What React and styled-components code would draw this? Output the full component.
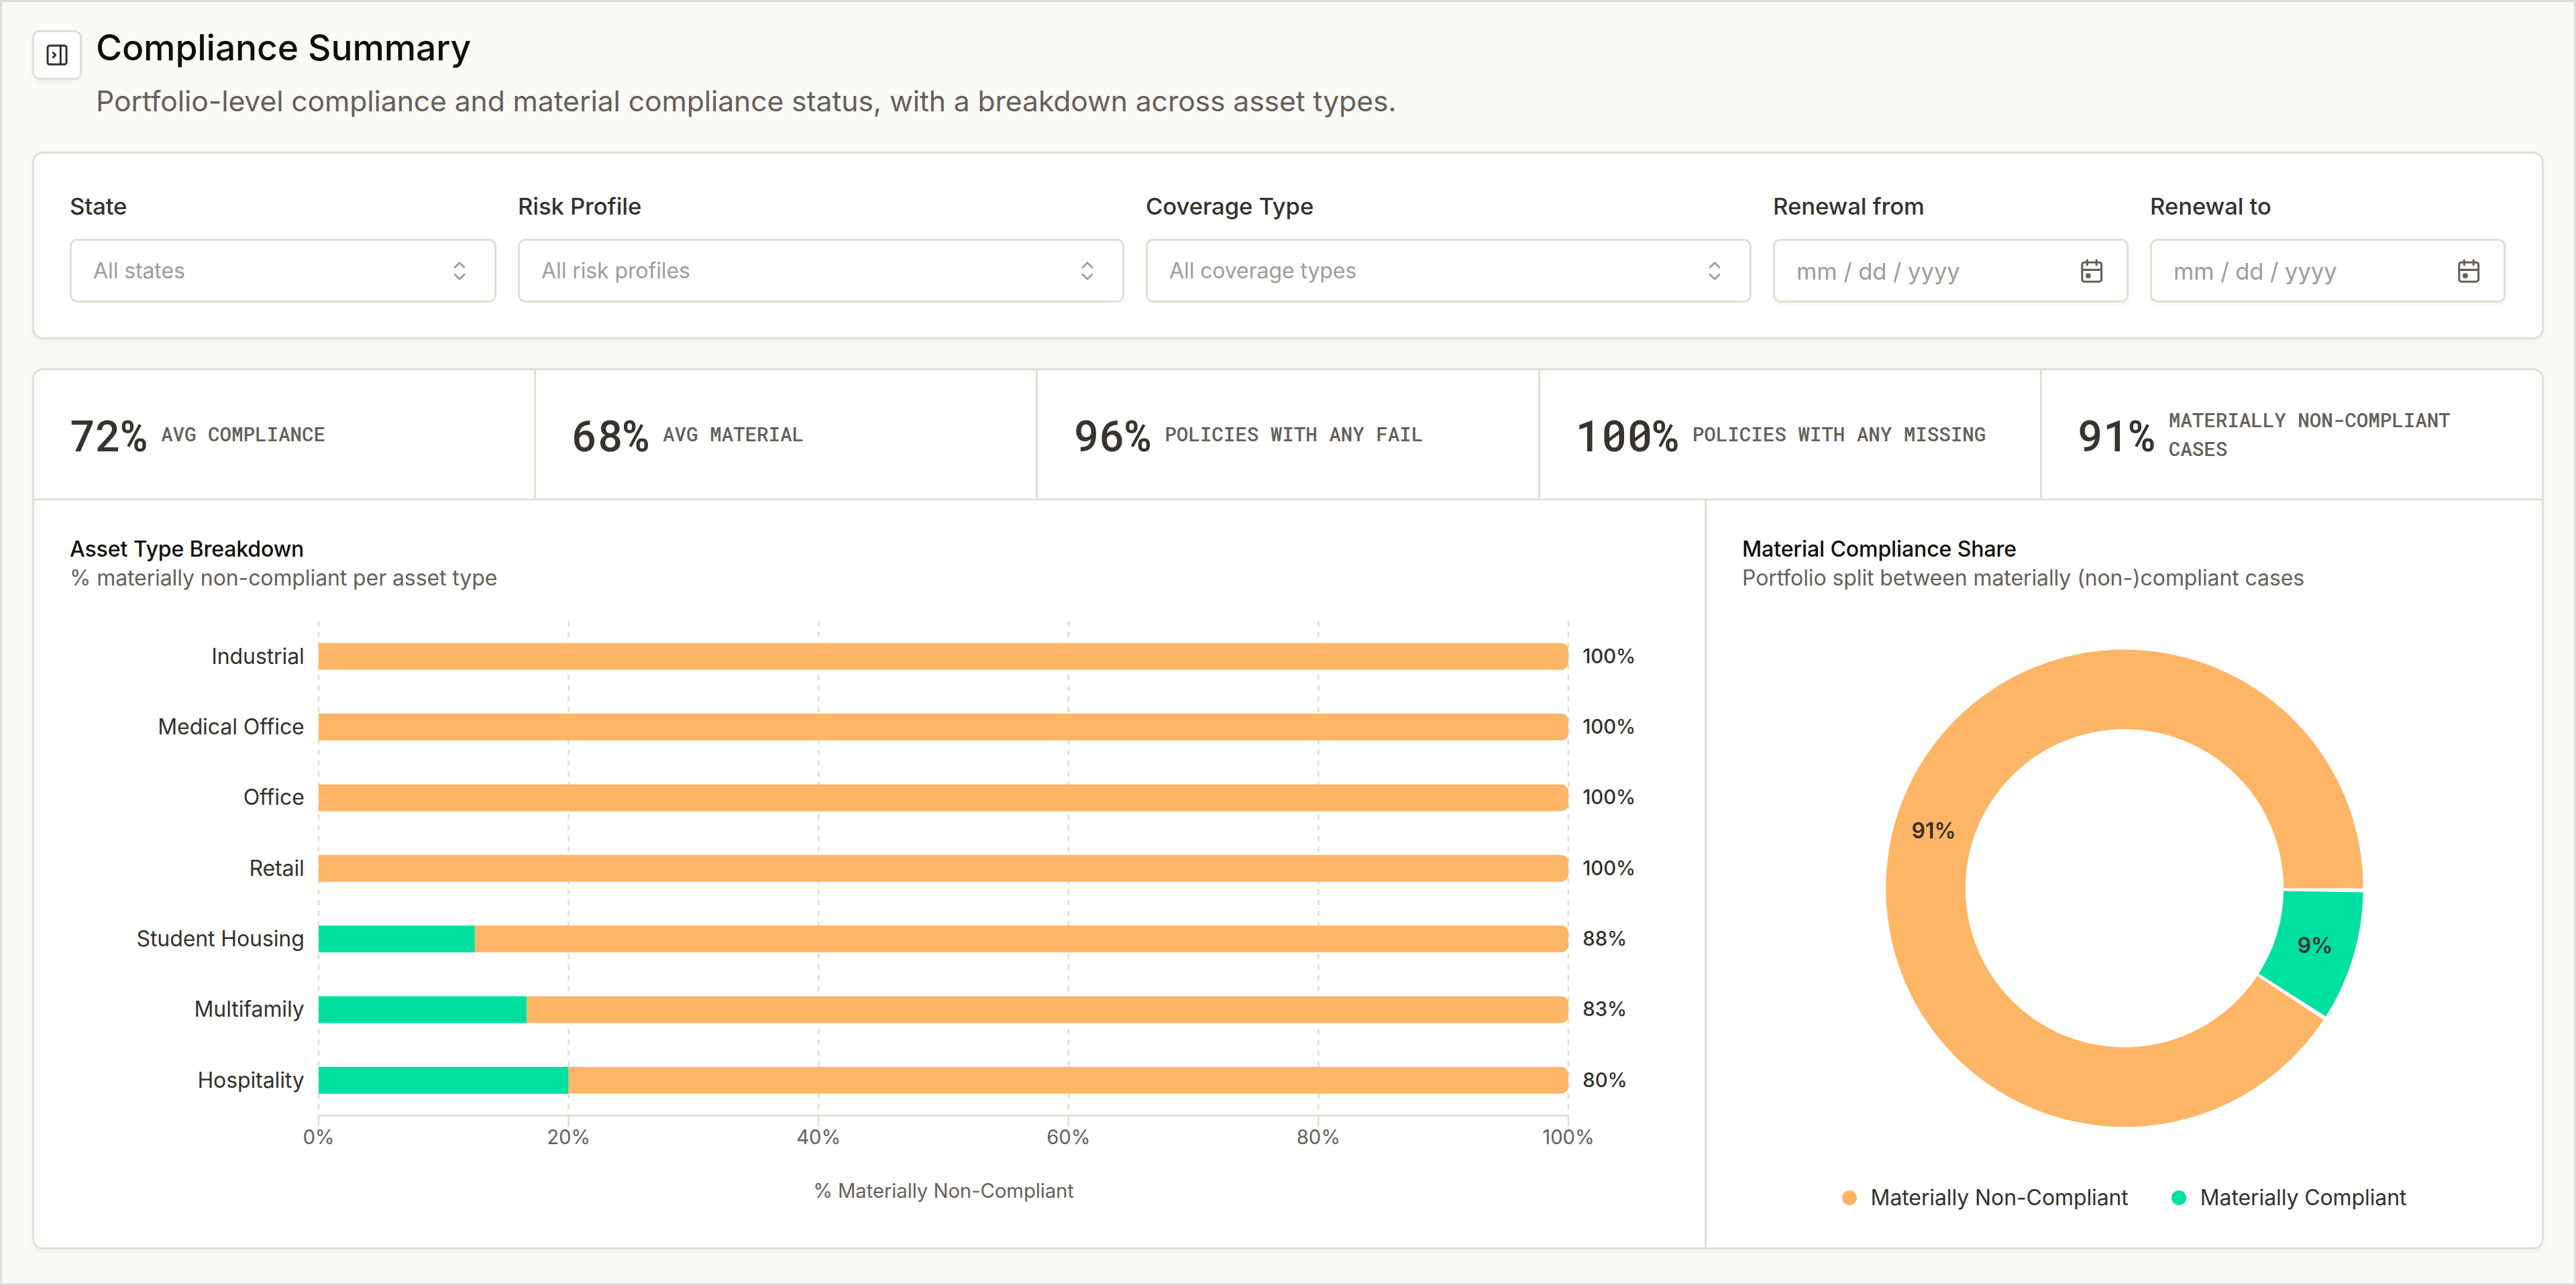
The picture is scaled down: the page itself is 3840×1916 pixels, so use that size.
import React from 'react';
import styled, { createGlobalStyle } from 'styled-components';

const GlobalStyle = createGlobalStyle`
  * {
    box-sizing: border-box;
  }
  body {
    margin: 0;
    background: #fafaf7;
    font-family: Inter, "Liberation Sans", sans-serif;
    letter-spacing: -0.1px;
    color: #34312b;
  }
`
const Page = styled.main`
  display: flex;
  flex-direction: column;
  width: 3840px;
  height: 1916px;
  padding: 33px 45px 50px;
  border: 3px solid #e4ded2;
  background: #fafaf7;
`
const Header = styled.header`
  display: flex;
  align-items: flex-start;
  gap: 21px;
  height: 190px;
`
const ToggleButton = styled.button`
  display: flex;
  align-items: center;
  justify-content: center;
  width: 74px;
  height: 74px;
  margin-top: 9px;
  padding: 0;
  color: #34312b;
  background: #fff;
  border: 3px solid #e4ded2;
  border-radius: 11px;
  box-shadow: 0 3px 6px rgba(60, 45, 20, 0.06);
`
const Title = styled.h1`
  margin: 0;
  font-size: 53.33px;
  font-weight: 500;
  line-height: 70px;
  color: #0c0f08;
`
const Subtitle = styled.p`
  margin: 12px 0 0;
  font-size: 42.67px;
  line-height: 65px;
  color: #665f58;
`
const Card = styled.section`
  background: #fff;
  border: 3px solid #e4ded2;
  border-radius: 16px;
  box-shadow: 0 3px 8px rgba(60, 45, 20, 0.06);
`
const FilterCard = styled(Card)`
  display: grid;
  grid-template-columns: 636px 904px 903px 530px 530px;
  column-gap: 32px;
  height: 280px;
  padding: 53px;
`
const Label = styled.div`
  height: 74px;
  font-size: 34.67px;
  font-weight: 500;
  line-height: 50px;
`
const Field = styled.div`
  display: flex;
  align-items: center;
  justify-content: space-between;
  height: 95px;
  padding: 0 ${props => props.$date ? 34 : 40}px 0 32px;
  font-size: ${props => props.$date ? 34.67 : 32}px;
  color: #a19c95;
  border: 3px solid #e4ded2;
  border-radius: 11px;
  box-shadow: ${props => props.$date ? '0 3px 6px rgba(60, 45, 20, 0.06)' : 'none'};
`
const ReportCard = styled(Card)`
  display: flex;
  flex-direction: column;
  gap: 3px;
  flex: 1;
  margin-top: 43px;
  overflow: hidden;
  background: #e4ded2;
`
const Stats = styled.div`
  display: grid;
  grid-template-columns: repeat(5, 1fr);
  gap: 3px;
  height: 191px;
`
const Stat = styled.div`
  display: flex;
  align-items: center;
  gap: 21px;
  padding: 0 53px;
  background: #fff;
  font-family: "Roboto Mono", "DejaVu Sans Mono", monospace;
  font-weight: 500;
`
const StatValue = styled.span`
  font-size: 64px;
  line-height: 1;
  color: #38342d;
`
const StatLabel = styled.span`
  font-size: 29.33px;
  line-height: 42.67px;
  text-transform: uppercase;
  color: #665f58;
`
const Charts = styled.div`
  display: grid;
  grid-template-columns: 2490px 1fr;
  gap: 3px;
  flex: 1;
`
const Panel = styled.div`
  display: flex;
  flex-direction: column;
  padding-top: 52px;
  background: #fff;
`
const PanelTitle = styled.h2`
  margin: 0 53px;
  font-size: 32px;
  font-weight: 500;
  line-height: 42.67px;
  color: #0c0f08;
`
const PanelText = styled.p`
  margin: 0 53px;
  font-size: 32px;
  line-height: 42.67px;
  color: #665f58;
`
const ChartSvg = styled.svg`
  display: block;
  flex: none;
  margin-top: 13.67px;
  font-family: Inter, "Liberation Sans", sans-serif;
`
const Legend = styled.div`
  display: flex;
  justify-content: center;
  gap: 64px;
  font-size: 32px;
  line-height: 44px;
`
const LegendItem = styled.div`
  display: flex;
  align-items: center;
  gap: 21px;
`
const Dot = styled.span`
  width: 22px;
  height: 22px;
  border-radius: 50%;
  background: ${props => props.$color};
`

const ORANGE = '#ffb566';
const GREEN = '#00e0a0';
const LINE = '#e4ded2';

const filters = [
  {label: 'State', placeholder: 'All states'},
  {label: 'Risk Profile', placeholder: 'All risk profiles'},
  {label: 'Coverage Type', placeholder: 'All coverage types'},
  {label: 'Renewal from', placeholder: 'mm / dd / yyyy', date: true},
  {label: 'Renewal to', placeholder: 'mm / dd / yyyy', date: true},
];
const stats = [
  {value: '72%', label: 'Avg compliance'},
  {value: '68%', label: 'Avg material'},
  {value: '96%', label: 'Policies with any fail'},
  {value: '100%', label: 'Policies with any missing'},
  {value: '91%', label: 'Materially non-compliant cases'},
];
const assets = [
  {name: 'Industrial', compliant: 0, label: '100%'},
  {name: 'Medical Office', compliant: 0, label: '100%'},
  {name: 'Office', compliant: 0, label: '100%'},
  {name: 'Retail', compliant: 0, label: '100%'},
  {name: 'Student Housing', compliant: 12.5, label: '88%'},
  {name: 'Multifamily', compliant: 16.67, label: '83%'},
  {name: 'Hospitality', compliant: 20, label: '80%'},
];

const SidebarIcon = () => (
  <svg width="36" height="36" viewBox="0 0 36 36" fill="none" stroke="currentColor" strokeWidth="3" strokeLinecap="round" strokeLinejoin="round">
    <rect x="4" y="4" width="28" height="28" rx="3" />
    <path d="M23.3 4v28M12.2 14.5l3.5 3.5-3.5 3.5" />
  </svg>
)

const SelectorIcon = () => (
  <svg width="24" height="32" viewBox="0 0 24 32" fill="none" stroke="currentColor" strokeWidth="2.8" strokeLinecap="round" strokeLinejoin="round">
    <path d="M5 10.7l7-6.9 7 6.9M5 21.3l7 6.9 7-6.9" />
  </svg>
)

const CalendarIcon = () => (
  <svg width="36" height="40" viewBox="0 0 36 40" fill="none" stroke="#665f58" strokeWidth="3.1" strokeLinecap="round" strokeLinejoin="round">
    <rect x="3.8" y="7.2" width="28.8" height="28.8" rx="3.4" />
    <path d="M11.3 3.9v7.2M25.2 3.9v7.2M3.8 18.4h28.8" />
    <rect x="9.2" y="23.6" width="7.4" height="7.2" rx="2" fill="#665f58" stroke="none" />
  </svg>
)

// plot area of the bar chart, in panel pixels
const PLOT = {left: 424, top: 29, width: 1863, height: 737.5};
const ROW = PLOT.height / assets.length;
const RADIUS = 10.7;

const BarChart = () => {
  const right = PLOT.left + PLOT.width;
  const bottom = PLOT.top + PLOT.height;
  return (
    <ChartSvg width="2490" height="920" viewBox="0 0 2490 920">
      {[0, 20, 40, 60, 80, 100].map(tick => {
        const x = PLOT.left + PLOT.width * tick / 100;
        return (
          <g key={tick}>
            <path d={`M${x} ${PLOT.top}V${bottom}`} stroke={LINE} strokeWidth="2.67" strokeDasharray="8 8" />
            <path d={`M${x} ${bottom}v16`} stroke={LINE} strokeWidth="2.67" />
            <text x={x} y="809.3" fontSize="29.33" fill="#665f58" textAnchor="middle">{tick}%</text>
          </g>
        )
      })}
      <path d={`M${PLOT.left} ${bottom}H${right}`} stroke={LINE} strokeWidth="2.67" />
      {assets.map((asset, i) => {
        const y = PLOT.top + ROW * (i + 0.5);
        const split = PLOT.left + PLOT.width * asset.compliant / 100;
        return (
          <g key={asset.name}>
            <text x={PLOT.left - 21.3} y={y + 11} fontSize="32" fill="#34312b" textAnchor="end">{asset.name}</text>
            <rect x={PLOT.left} y={y - 20} width={split - PLOT.left} height="40" fill={GREEN} />
            <path
              d={`M${split} ${y - 20}H${right - RADIUS}a${RADIUS} ${RADIUS} 0 0 1 ${RADIUS} ${RADIUS}V${y + 20 - RADIUS}a${RADIUS} ${RADIUS} 0 0 1 -${RADIUS} ${RADIUS}H${split}Z`}
              fill={ORANGE}
            />
            <text x={right + 21.3} y={y + 10} fontSize="29.33" fontWeight="500" fill="#34312b">{asset.label}</text>
          </g>
        )
      })}
      <text x={PLOT.left + PLOT.width / 2} y="888.5" fontSize="29.33" fill="#665f58" textAnchor="middle">% Materially Non-Compliant</text>
    </ChartSvg>
  )
}

const CX = 623;
const CY = 427.4;
const OUTER = 355.8;
const INNER = 237.2;

const point = (r, deg) => {
  const a = deg * Math.PI / 180;
  return `${CX + r * Math.cos(a)} ${CY + r * Math.sin(a)}`;
}
const arc = (from, to) => {
  const large = to - from > 180 ? 1 : 0;
  return `M${point(OUTER, from)}A${OUTER} ${OUTER} 0 ${large} 1 ${point(OUTER, to)}L${point(INNER, to)}A${INNER} ${INNER} 0 ${large} 0 ${point(INNER, from)}Z`;
}

const Donut = () => (
  <ChartSvg width="1245" height="867" viewBox="0 0 1245 867">
    <path d={arc(33.5, 360)} fill={ORANGE} />
    <path d={arc(1, 32.5)} fill={GREEN} />
    <g fontSize="32" fontWeight="600" fill="#34312b" textAnchor="middle">
      <text x="338.5" y="353.3">91%</text>
      <text x="907" y="524.3">9%</text>
    </g>
  </ChartSvg>
)

const App = () => (
  <>
    <GlobalStyle />
    <Page>
      <Header>
        <ToggleButton aria-label="Toggle sidebar"><SidebarIcon /></ToggleButton>
        <div>
          <Title>Compliance Summary</Title>
          <Subtitle>Portfolio-level compliance and material compliance status, with a breakdown across asset types.</Subtitle>
        </div>
      </Header>
      <FilterCard>
        {filters.map(filter => (
          <div key={filter.label}>
            <Label>{filter.label}</Label>
            <Field $date={filter.date}>
              {filter.placeholder}
              {filter.date ? <CalendarIcon /> : <SelectorIcon />}
            </Field>
          </div>
        ))}
      </FilterCard>
      <ReportCard>
        <Stats>
          {stats.map(stat => (
            <Stat key={stat.label}>
              <StatValue>{stat.value}</StatValue>
              <StatLabel>{stat.label}</StatLabel>
            </Stat>
          ))}
        </Stats>
        <Charts>
          <Panel>
            <PanelTitle>Asset Type Breakdown</PanelTitle>
            <PanelText>% materially non-compliant per asset type</PanelText>
            <BarChart />
          </Panel>
          <Panel>
            <PanelTitle>Material Compliance Share</PanelTitle>
            <PanelText>Portfolio split between materially (non-)compliant cases</PanelText>
            <Donut />
            <Legend>
              <LegendItem><Dot $color={ORANGE} />Materially Non-Compliant</LegendItem>
              <LegendItem><Dot $color={GREEN} />Materially Compliant</LegendItem>
            </Legend>
          </Panel>
        </Charts>
      </ReportCard>
    </Page>
  </>
)

export default App;
